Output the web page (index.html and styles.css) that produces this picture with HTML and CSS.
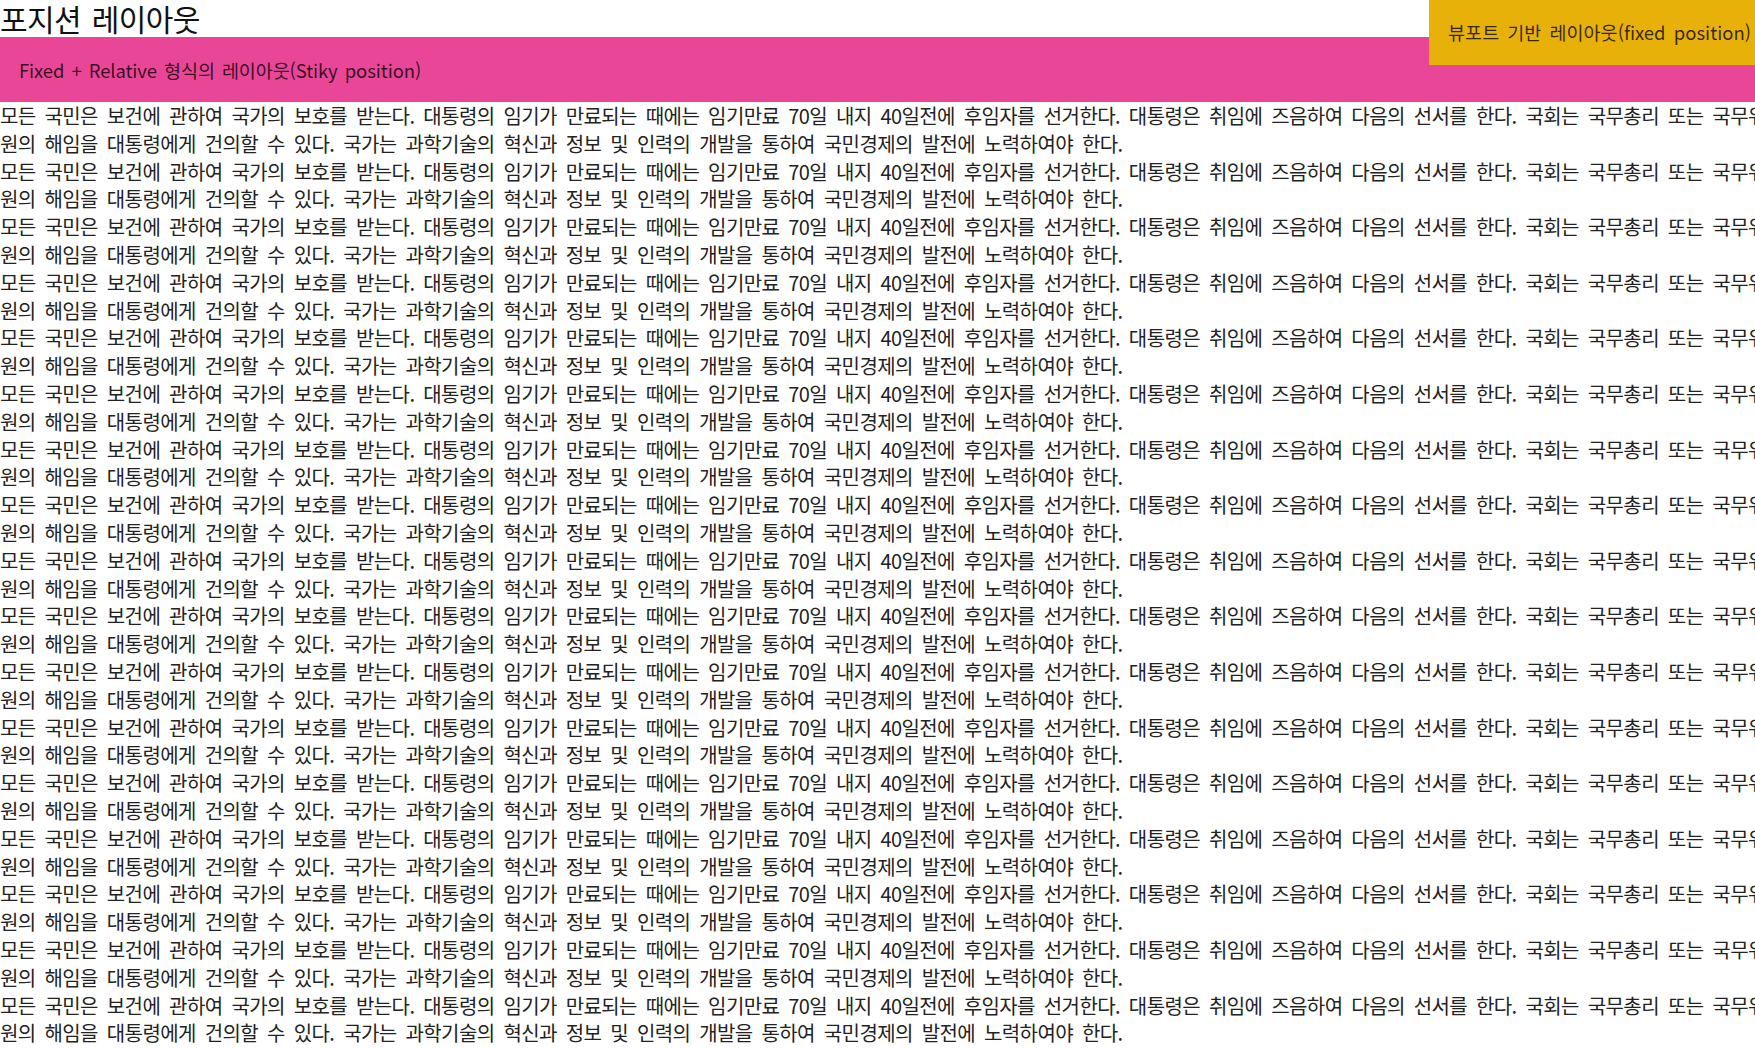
FILE: index.html
```html
<!DOCTYPE html>
<html lang="ko">
<head>
  <meta charset="UTF-8">
  <meta name="viewport" content="width=device-width, initial-scale=1.0">
  <title>포지션 레이아웃</title>
  <link rel="stylesheet" href="styles.css">
</head>
<body>
  <h1 class="page-title">포지션 레이아웃</h1>

  <header class="sticky-bar">Fixed + Relative 형식의 레이아웃(Stiky position)</header>

  <div class="fixed-box">뷰포트 기반 레이아웃(fixed position)</div>

  <main class="content">
    <p>모든 국민은 보건에 관하여 국가의 보호를 받는다. 대통령의 임기가 만료되는 때에는 임기만료 70일 내지 40일전에 후임자를 선거한다. 대통령은 취임에 즈음하여 다음의 선서를 한다. 국회는 국무총리 또는 국무위원의 해임을 대통령에게 건의할 수 있다. 국가는 과학기술의 혁신과 정보 및 인력의 개발을 통하여 국민경제의 발전에 노력하여야 한다.</p>
    <p>모든 국민은 보건에 관하여 국가의 보호를 받는다. 대통령의 임기가 만료되는 때에는 임기만료 70일 내지 40일전에 후임자를 선거한다. 대통령은 취임에 즈음하여 다음의 선서를 한다. 국회는 국무총리 또는 국무위원의 해임을 대통령에게 건의할 수 있다. 국가는 과학기술의 혁신과 정보 및 인력의 개발을 통하여 국민경제의 발전에 노력하여야 한다.</p>
    <p>모든 국민은 보건에 관하여 국가의 보호를 받는다. 대통령의 임기가 만료되는 때에는 임기만료 70일 내지 40일전에 후임자를 선거한다. 대통령은 취임에 즈음하여 다음의 선서를 한다. 국회는 국무총리 또는 국무위원의 해임을 대통령에게 건의할 수 있다. 국가는 과학기술의 혁신과 정보 및 인력의 개발을 통하여 국민경제의 발전에 노력하여야 한다.</p>
    <p>모든 국민은 보건에 관하여 국가의 보호를 받는다. 대통령의 임기가 만료되는 때에는 임기만료 70일 내지 40일전에 후임자를 선거한다. 대통령은 취임에 즈음하여 다음의 선서를 한다. 국회는 국무총리 또는 국무위원의 해임을 대통령에게 건의할 수 있다. 국가는 과학기술의 혁신과 정보 및 인력의 개발을 통하여 국민경제의 발전에 노력하여야 한다.</p>
    <p>모든 국민은 보건에 관하여 국가의 보호를 받는다. 대통령의 임기가 만료되는 때에는 임기만료 70일 내지 40일전에 후임자를 선거한다. 대통령은 취임에 즈음하여 다음의 선서를 한다. 국회는 국무총리 또는 국무위원의 해임을 대통령에게 건의할 수 있다. 국가는 과학기술의 혁신과 정보 및 인력의 개발을 통하여 국민경제의 발전에 노력하여야 한다.</p>
    <p>모든 국민은 보건에 관하여 국가의 보호를 받는다. 대통령의 임기가 만료되는 때에는 임기만료 70일 내지 40일전에 후임자를 선거한다. 대통령은 취임에 즈음하여 다음의 선서를 한다. 국회는 국무총리 또는 국무위원의 해임을 대통령에게 건의할 수 있다. 국가는 과학기술의 혁신과 정보 및 인력의 개발을 통하여 국민경제의 발전에 노력하여야 한다.</p>
    <p>모든 국민은 보건에 관하여 국가의 보호를 받는다. 대통령의 임기가 만료되는 때에는 임기만료 70일 내지 40일전에 후임자를 선거한다. 대통령은 취임에 즈음하여 다음의 선서를 한다. 국회는 국무총리 또는 국무위원의 해임을 대통령에게 건의할 수 있다. 국가는 과학기술의 혁신과 정보 및 인력의 개발을 통하여 국민경제의 발전에 노력하여야 한다.</p>
    <p>모든 국민은 보건에 관하여 국가의 보호를 받는다. 대통령의 임기가 만료되는 때에는 임기만료 70일 내지 40일전에 후임자를 선거한다. 대통령은 취임에 즈음하여 다음의 선서를 한다. 국회는 국무총리 또는 국무위원의 해임을 대통령에게 건의할 수 있다. 국가는 과학기술의 혁신과 정보 및 인력의 개발을 통하여 국민경제의 발전에 노력하여야 한다.</p>
    <p>모든 국민은 보건에 관하여 국가의 보호를 받는다. 대통령의 임기가 만료되는 때에는 임기만료 70일 내지 40일전에 후임자를 선거한다. 대통령은 취임에 즈음하여 다음의 선서를 한다. 국회는 국무총리 또는 국무위원의 해임을 대통령에게 건의할 수 있다. 국가는 과학기술의 혁신과 정보 및 인력의 개발을 통하여 국민경제의 발전에 노력하여야 한다.</p>
    <p>모든 국민은 보건에 관하여 국가의 보호를 받는다. 대통령의 임기가 만료되는 때에는 임기만료 70일 내지 40일전에 후임자를 선거한다. 대통령은 취임에 즈음하여 다음의 선서를 한다. 국회는 국무총리 또는 국무위원의 해임을 대통령에게 건의할 수 있다. 국가는 과학기술의 혁신과 정보 및 인력의 개발을 통하여 국민경제의 발전에 노력하여야 한다.</p>
    <p>모든 국민은 보건에 관하여 국가의 보호를 받는다. 대통령의 임기가 만료되는 때에는 임기만료 70일 내지 40일전에 후임자를 선거한다. 대통령은 취임에 즈음하여 다음의 선서를 한다. 국회는 국무총리 또는 국무위원의 해임을 대통령에게 건의할 수 있다. 국가는 과학기술의 혁신과 정보 및 인력의 개발을 통하여 국민경제의 발전에 노력하여야 한다.</p>
    <p>모든 국민은 보건에 관하여 국가의 보호를 받는다. 대통령의 임기가 만료되는 때에는 임기만료 70일 내지 40일전에 후임자를 선거한다. 대통령은 취임에 즈음하여 다음의 선서를 한다. 국회는 국무총리 또는 국무위원의 해임을 대통령에게 건의할 수 있다. 국가는 과학기술의 혁신과 정보 및 인력의 개발을 통하여 국민경제의 발전에 노력하여야 한다.</p>
    <p>모든 국민은 보건에 관하여 국가의 보호를 받는다. 대통령의 임기가 만료되는 때에는 임기만료 70일 내지 40일전에 후임자를 선거한다. 대통령은 취임에 즈음하여 다음의 선서를 한다. 국회는 국무총리 또는 국무위원의 해임을 대통령에게 건의할 수 있다. 국가는 과학기술의 혁신과 정보 및 인력의 개발을 통하여 국민경제의 발전에 노력하여야 한다.</p>
    <p>모든 국민은 보건에 관하여 국가의 보호를 받는다. 대통령의 임기가 만료되는 때에는 임기만료 70일 내지 40일전에 후임자를 선거한다. 대통령은 취임에 즈음하여 다음의 선서를 한다. 국회는 국무총리 또는 국무위원의 해임을 대통령에게 건의할 수 있다. 국가는 과학기술의 혁신과 정보 및 인력의 개발을 통하여 국민경제의 발전에 노력하여야 한다.</p>
    <p>모든 국민은 보건에 관하여 국가의 보호를 받는다. 대통령의 임기가 만료되는 때에는 임기만료 70일 내지 40일전에 후임자를 선거한다. 대통령은 취임에 즈음하여 다음의 선서를 한다. 국회는 국무총리 또는 국무위원의 해임을 대통령에게 건의할 수 있다. 국가는 과학기술의 혁신과 정보 및 인력의 개발을 통하여 국민경제의 발전에 노력하여야 한다.</p>
    <p>모든 국민은 보건에 관하여 국가의 보호를 받는다. 대통령의 임기가 만료되는 때에는 임기만료 70일 내지 40일전에 후임자를 선거한다. 대통령은 취임에 즈음하여 다음의 선서를 한다. 국회는 국무총리 또는 국무위원의 해임을 대통령에게 건의할 수 있다. 국가는 과학기술의 혁신과 정보 및 인력의 개발을 통하여 국민경제의 발전에 노력하여야 한다.</p>
    <p>모든 국민은 보건에 관하여 국가의 보호를 받는다. 대통령의 임기가 만료되는 때에는 임기만료 70일 내지 40일전에 후임자를 선거한다. 대통령은 취임에 즈음하여 다음의 선서를 한다. 국회는 국무총리 또는 국무위원의 해임을 대통령에게 건의할 수 있다. 국가는 과학기술의 혁신과 정보 및 인력의 개발을 통하여 국민경제의 발전에 노력하여야 한다.</p>
    <p>모든 국민은 보건에 관하여 국가의 보호를 받는다. 대통령의 임기가 만료되는 때에는 임기만료 70일 내지 40일전에 후임자를 선거한다. 대통령은 취임에 즈음하여 다음의 선서를 한다. 국회는 국무총리 또는 국무위원의 해임을 대통령에게 건의할 수 있다. 국가는 과학기술의 혁신과 정보 및 인력의 개발을 통하여 국민경제의 발전에 노력하여야 한다.</p>
  </main>
</body>
</html>
```

FILE: styles.css
```css
html, body {
  overflow-x: hidden;
}

body {
  margin: 0;
  font-family: "Noto Sans CJK KR", "Noto Sans", sans-serif;
  color: #222;
}

.page-title {
  margin: 0;
  font-size: 30px;
  font-weight: normal;
  line-height: 37px;
  letter-spacing: -0.6px;
  word-spacing: 3px;
  color: #111;
}

.sticky-bar {
  position: sticky;
  top: 0;
  height: 65px;
  padding: 2px 19px 0;
  box-sizing: border-box;
  line-height: 63px;
  font-size: 18.5px;
  letter-spacing: -0.1px;
  word-spacing: 2px;
  background-color: #ea4697;
  color: rgba(0, 0, 0, 0.78);
}

.fixed-box {
  position: fixed;
  top: 0;
  right: 0;
  height: 65px;
  padding: 0 4px 0 19px;
  line-height: 65px;
  font-size: 18.5px;
  letter-spacing: 0;
  word-spacing: 3px;
  background-color: #e8b10a;
  color: rgba(0, 0, 0, 0.78);
  z-index: 10;
}

.content {
  width: 1766px;
}

.content p {
  margin: 0;
  font-size: 20px;
  line-height: 27.8px;
  letter-spacing: -0.6px;
  word-spacing: 3.9px;
}
```
